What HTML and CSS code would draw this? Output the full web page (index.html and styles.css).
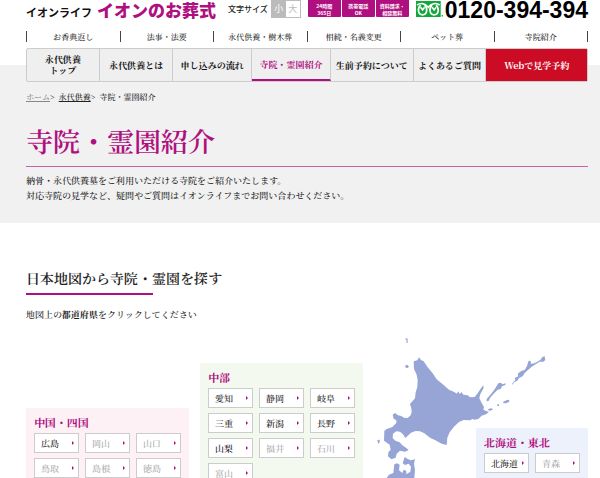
FILE: index.html
```html
<!DOCTYPE html>
<html lang="ja">
<head>
<meta charset="utf-8">
<meta name="viewport" content="width=device-width, initial-scale=1">
<title>寺院・霊園紹介</title>
<link rel="stylesheet" href="styles.css">
</head>
<body>
<header class="wrap site-header">
  <a class="brand" href="#"><span class="brand-sub">イオンライフ</span><span class="brand-main">イオンのお葬式</span></a>
  <div class="text-size"><span>文字サイズ</span><div class="size-buttons"><button class="size-button active" type="button">小</button><button class="size-button" type="button">大</button></div></div>
  <ul class="badges"><li>24時間<br>365日</li><li>携帯電話<br>OK</li><li>資料請求・<br>相談無料</li></ul>
  <a class="phone" href="tel:0120394394">
    <svg class="freedial" viewBox="0 0 82 48" aria-hidden="true">
      <path class="dial-bg" d="M0 0H75V48H0ZM78 42H82V47H78Z"/>
      <path class="dial-line" d="M3 12C15 4 28 8 37 19C46 8 60 4 72 12"/>
      <path class="dial-line" d="M14 12C3 22 6 42 20 42C34 42 37 22 26 12M49 12C38 22 41 42 55 42C69 42 72 22 61 12"/>
      <path class="dial-line" d="M14 19L20 27L26 19M49 19L55 27L61 19"/>
    </svg>
    <span class="phone-number">0120-394-394</span>
  </a>
</header>
<nav class="wrap sub-nav">
  <a href="#">お香典返し</a><a href="#">法事・法要</a><a href="#">永代供養・樹木葬</a><a href="#">相続・名義変更</a><a href="#">ペット葬</a><a href="#">寺院紹介</a>
</nav>
<nav class="wrap main-nav">
  <a href="#">永代供養<br>トップ</a><a href="#">永代供養とは</a><a href="#">申し込みの流れ</a><a class="current" href="#">寺院・霊園紹介</a><a href="#">生前予約について</a><a href="#">よくあるご質問</a><a class="reserve" href="#">Webで見学予約</a>
</nav>
<section class="hero">
  <div class="wrap">
    <div class="breadcrumb"><a class="home" href="#">ホーム</a><span class="sep">&gt;</span><a href="#">永代供養</a><span class="sep">&gt;</span><span>寺院・霊園紹介</span></div>
    <h1>寺院・霊園紹介</h1>
    <p class="lead">納骨・永代供養墓をご利用いただける寺院をご紹介いたします。<br>対応寺院の見学など、疑問やご質問はイオンライフまでお問い合わせください。</p>
  </div>
</section>
<main class="wrap">
  <h2>日本地図から寺院・霊園を探す</h2>
  <p class="hint">地図上の<strong>都道府県</strong>をクリックしてください</p>
  <div class="map-area">
    <svg class="map" viewBox="189 45 675 429" role="img" aria-label="北海道">
      <path d="M357 112L363 120L371 124L383 142L398 160L410 178L430 194L447 209L463 216L470 221L475 214L479 222L485 216L490 224L503 226L510 232L524 231L533 220L545 202L551 196L550 206L541 222L538 235L545 249L552 261L550 269L560 274L567 275L558 283L545 287L535 297L523 299L517 297L510 301L491 300L477 306L462 320L449 337L442 353L440 375L425 371L406 361L390 353L373 340L360 334L347 333L333 338L316 354L309 343L300 335L289 334L279 341L278 354L286 362L299 367L307 376L319 384L326 390L315 395L300 392L290 401L287 413L274 418L264 409L265 397L272 389L269 374L252 362L253 333L260 327L277 321L289 309L289 301L281 296L278 284L285 279L294 286L304 288L312 293L323 294L332 286L335 275L334 265L330 252L337 244L345 235L347 217L352 201L353 181L350 164L342 147L341 124L352 121Z"/>
      <path d="M314 411L322 416L332 421L345 418L342 431L345 450L343 474H260L267 464L280 459L283 433L291 430L299 434L297 451L307 459L311 449L319 453L319 463L331 455L333 440L326 431L315 435L308 430Z"/>
      <path d="M318 54L323 57L323 69L319 68L320 61L316 57ZM316 136L323 135L327 140L322 145L316 142ZM232 360L239 359L239 367L235 372Z"/>
      <path d="M560 237L573 222L584 208L595 190L603 188L607 193L617 190L616 195L606 199L602 207L593 209L581 221L570 234L566 243L560 244ZM637 190L646 180L644 174L655 169L653 161L664 153L674 150L681 138L686 122L692 123L693 132L705 129L721 120L727 111L734 109L736 120L730 125L719 125L708 132L695 140L684 150L674 159L668 169L657 174L652 182L642 187L638 195ZM563 268L573 265L580 268L569 273ZM592 253L597 253L597 258L592 258ZM609 246L619 241L627 239L628 245L618 250L610 249Z"/>
    </svg>
    <section class="region chugoku">
      <h3>中国・四国</h3>
      <div class="prefs"><a href="#">広島</a><a class="off">岡山</a><a class="off">山口</a><a class="off">鳥取</a><a class="off">島根</a><a class="off">徳島</a></div>
    </section>
    <section class="region chubu">
      <h3>中部</h3>
      <div class="prefs"><a href="#">愛知</a><a href="#">静岡</a><a href="#">岐阜</a><a href="#">三重</a><a href="#">新潟</a><a href="#">長野</a><a href="#">山梨</a><a class="off">福井</a><a class="off">石川</a><a class="off">富山</a></div>
    </section>
    <section class="region hokkaido">
      <h3>北海道・東北</h3>
      <div class="prefs"><a href="#">北海道</a><a class="off">青森</a></div>
    </section>
  </div>
</main>
</body>
</html>
```
FILE: styles.css
```css
* { box-sizing: border-box; }
body {
  display: flex;
  flex-direction: column;
  height: 100vh;
  margin: 0;
  overflow: hidden;
  background: #fff;
  color: #222;
  font: 500 9px/15px "Noto Serif JP", "Noto Serif CJK JP", "Noto Sans CJK JP", serif;
}
a { color: inherit; text-decoration: none; }
h1, h2, h3, p, ul { margin: 0; padding: 0; }
.wrap { margin: 0 12px 0 26px; }

.site-header {
  display: flex;
  align-items: flex-start;
  gap: 7px;
  height: 31px;
  font-family: "Noto Sans CJK JP", sans-serif;
  white-space: nowrap;
}
.brand { display: flex; align-items: baseline; gap: 5px; line-height: 20px; }
.brand-sub { color: #111; font-size: 11px; font-weight: 700; }
.brand-main { color: #b0107f; font-size: 17px; font-weight: 900; }
.text-size { display: flex; gap: 3px; margin-left: 5px; font-size: 8px; line-height: 18px; }
.size-buttons { display: flex; border: 1px solid #bbb; }
.size-button {
  width: 14px;
  height: 16px;
  padding: 0;
  border: 0;
  background: #fff;
  color: #bbb;
  font: 9px/16px "Noto Sans CJK JP", sans-serif;
}
.size-button.active { background: #bbb; color: #fff; }
.badges { display: flex; gap: 1px; margin-left: auto; list-style: none; }
.badges li {
  width: 33px;
  height: 17px;
  padding-top: 2px;
  border-radius: 0 0 1px 1px;
  background: #b0107f;
  color: #fff;
  font-size: 5px;
  font-weight: 700;
  line-height: 7px;
  text-align: center;
}
.phone { display: flex; gap: 2px; }
.freedial { width: 27px; height: 16px; margin-top: 1px; }
.dial-bg { fill: #12a73b; }
.dial-line { fill: none; stroke: #fff; stroke-width: 5; }
.phone-number { color: #000; font: 700 23px/20px "Liberation Sans", sans-serif; }

.sub-nav {
  display: grid;
  grid-template-columns: repeat(6, 1fr);
  border-right: 1px solid #444;
  font-size: 8px;
  line-height: 11px;
  text-align: center;
}
.sub-nav a { border-left: 1px solid #444; }

.main-nav {
  position: relative;
  display: grid;
  grid-template-columns: 73fr 74fr 79fr 79fr 83fr 73fr 101fr;
  height: 34px;
  margin-top: 6px;
  border: 1px solid #ccc;
  border-radius: 2px;
  background: #efefef;
  color: #111;
  font-weight: 700;
  line-height: 11px;
  text-align: center;
  white-space: nowrap;
}
.main-nav a { display: grid; place-content: center; border-right: 1px solid #ccc; }
.main-nav .current { border-bottom: 2px solid #b0107f; color: #b0107f; }
.main-nav .reserve { border: 0; background: #cc0c24; color: #fff; }

.hero { height: 158px; margin-top: -17px; padding-top: 24px; background: #f1f1f1; }
.breadcrumb { display: flex; font-size: 8px; line-height: 16px; }
.breadcrumb a { text-decoration: underline; }
.breadcrumb .home { color: #888; }
.sep { margin-right: 4px; }
.hero h1 {
  padding: 16px 0 5px;
  border-bottom: 1px solid #c960aa;
  color: #b0107f;
  font-size: 27px;
  font-weight: 600;
  line-height: 40px;
}
.lead { margin-top: 6px; }

h2 { margin-top: 43px; font-size: 14px; font-weight: 600; line-height: 24px; }
h2::after {
  display: block;
  width: 127px;
  height: 2px;
  margin-top: 3px;
  background: #b0107f;
  content: "";
}
.hint { margin-top: 12px; }
main { display: flex; flex: 1; flex-direction: column; min-height: 0; }
.map-area {
  display: grid;
  flex: 1;
  grid-template-columns: 163px 11px 163px 1fr 112px;
  margin-top: 13px;
}
.map { grid-row: 1; grid-column: 4 / 6; width: 100%; fill: #96a5d6; }
.region { grid-row: 1; padding: 8px; }
.chugoku { grid-column: 1; margin-top: 73px; background: #fdf1f6; }
.chubu { grid-column: 3; margin-top: 28px; background: #f3f9ee; }
.hokkaido { z-index: 1; grid-column: 5; margin-top: 93px; background: #edf1fb; }
.region h3 { margin-bottom: 5px; color: #b0107f; font-size: 11px; font-weight: 700; line-height: 12px; }
.prefs { display: grid; grid-template-columns: repeat(auto-fill, 45px); gap: 5px 6px; }
.prefs a {
  display: flex;
  align-items: center;
  justify-content: space-between;
  height: 20px;
  padding: 0 4px 0 6px;
  border: 1px solid #ccc;
  background: #fff;
}
.prefs a::after {
  border: 2px solid transparent;
  border-right: 0;
  border-left: 2px solid #b0107f;
  content: "";
}
.prefs .off { color: #aaa; }
```
